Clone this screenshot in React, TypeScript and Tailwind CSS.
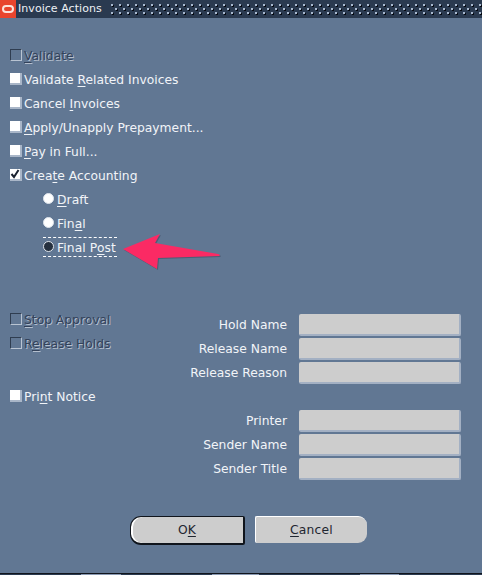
const font = { fontFamily: '"DejaVu Sans", sans-serif' };

function Mn({ t, u }: { t: string; u: number }) {
  return (
    <>
      {t.slice(0, u)}
      <span className="underline underline-offset-2">{t[u]}</span>
      {t.slice(u + 1)}
    </>
  );
}

function Check({ label, u, disabled, checked }: { label: string; u: number; disabled?: boolean; checked?: boolean }) {
  return (
    <div className="flex h-6 items-center">
      {disabled ? (
        <div className="mr-[2px] mb-[2px] h-[12px] w-[12px] border border-[#2f3d50] border-r-[#b9c4d2] border-b-[#b9c4d2]" />
      ) : (
        <div className="relative mr-[2px] mb-[2px] flex h-[12px] w-[12px] items-center justify-center border-r-2 border-b-2 border-[#a9b6c8] bg-white">
          {checked && (
            <svg viewBox="0 0 10 10" className="h-[10px] w-[10px]">
              <path d="M1.5 5 L4 8 L8.5 1" fill="none" stroke="#1a2230" strokeWidth="2" />
            </svg>
          )}
        </div>
      )}
      <span className={disabled ? "text-[#33425a] [text-shadow:1px_1px_0_#b4bfce]" : "text-[#f1f4f8]"}>
        <Mn t={label} u={u} />
      </span>
    </div>
  );
}

function Radio({ label, u, selected }: { label: string; u: number; selected?: boolean }) {
  return (
    <div className="flex h-6 items-center">
      <div
        className={
          "mb-[2px] flex h-5 w-[74px] items-center whitespace-nowrap " +
          (selected ? "border-y border-dashed border-white" : "")
        }
      >
        <div
          className={
            "mr-[3px] mb-[2px] h-[11px] w-[11px] rounded-full border border-[#dfe5ec] " +
            (selected ? "bg-[#25303f]" : "bg-white")
          }
        />
        <span className="mt-[2px] tracking-[0.1px] text-[#f1f4f8]">
          <Mn t={label} u={u} />
        </span>
      </div>
    </div>
  );
}

function Field({ label }: { label: string }) {
  return (
    <div className="flex h-6 items-center justify-end">
      <span className="mr-[12px] text-[#f1f4f8]">{label}</span>
      <div className="h-[22px] w-[162px] rounded-[2px] border-r-2 border-b-2 border-[#a3b0c3] bg-[#cdcdcd]" />
    </div>
  );
}

export default function App() {
  return (
    <div
      style={font}
      className="relative flex h-[575px] w-[482px] flex-col overflow-hidden bg-[#617793] text-[12.3px]"
    >
      <div className="flex h-[18px] items-center bg-[#2a3a50]">
        <div className="flex h-[18px] w-4 items-center justify-center bg-[#e8452e]">
          <div className="h-[8px] w-[12px] rounded-full border-2 border-[#fbe3dc]" />
        </div>
        <span className="ml-[2px] text-[11px] tracking-[0.05px] text-[#eef1f5]">Invoice Actions</span>
        <svg className="ml-[9px] h-[18px] flex-1" aria-hidden="true">
          <defs>
            <pattern id="grip" width="8" height="8" patternUnits="userSpaceOnUse" y="3">
              <rect x="0" y="1" width="2" height="2" fill="#a9b9cf" />
              <rect x="2" y="2" width="1" height="2" fill="#060a12" />
              <rect x="1" y="3" width="2" height="1" fill="#060a12" />
              <rect x="4" y="5" width="2" height="2" fill="#a9b9cf" />
              <rect x="6" y="6" width="1" height="2" fill="#060a12" />
              <rect x="5" y="7" width="2" height="1" fill="#060a12" />
            </pattern>
          </defs>
          <rect x="0" y="3" width="100%" height="13" fill="url(#grip)" />
        </svg>
      </div>

      <div className="mt-[26px] flex flex-col pl-[10px]">
        <Check label="Validate" u={0} disabled />
        <Check label="Validate Related Invoices" u={9} />
        <Check label="Cancel Invoices" u={7} />
        <Check label="Apply/Unapply Prepayment..." u={0} />
        <Check label="Pay in Full..." u={0} />
        <Check label="Create Accounting" u={4} checked />
        <div className="flex flex-col pl-[33px]">
          <Radio label="Draft" u={0} />
          <Radio label="Final" u={3} />
          <Radio label="Final Post" u={7} selected />
        </div>
      </div>

      <div className="mt-[48px] flex pl-[10px] pr-[21px]">
        <div className="flex flex-col">
          <Check label="Stop Approval" u={0} disabled />
          <Check label="Release Holds" u={1} disabled />
        </div>
        <div className="flex flex-1 flex-col pt-[5px]">
          <Field label="Hold Name" />
          <Field label="Release Name" />
          <Field label="Release Reason" />
        </div>
      </div>

      <div className="flex pl-[10px] pr-[21px]">
        <div className="flex flex-col">
          <Check label="Print Notice" u={3} />
        </div>
        <div className="flex flex-1 flex-col pt-[24px]">
          <Field label="Printer" />
          <Field label="Sender Name" />
          <Field label="Sender Title" />
        </div>
      </div>

      <div className="mt-[35px] flex pl-[130px] text-[#1f2630]">
        <div className="flex h-[29px] w-[115px] items-center justify-center rounded-l-[11px] rounded-r-[2px] border border-r-2 border-b-2 border-[#10151c] bg-[#cdcdcd] shadow-[inset_2px_0_0_#ffffff]">
          <Mn t="OK" u={1} />
        </div>
        <div className="ml-[10px] flex h-[27px] w-[112px] items-center justify-center rounded-l-[2px] rounded-r-[9px] border-t border-l border-white bg-[#cdcdcd] tracking-[0.2px]">
          <Mn t="Cancel" u={0} />
        </div>
      </div>

      <div className="absolute bottom-0 left-0 flex h-[2px] w-full border-t border-[#10151c] bg-[#2a3a50]">
        <div className="ml-[81px] w-[40px] bg-[#8a9ab3]" />
        <div className="ml-[91px] w-[47px] bg-[#8a9ab3]" />
        <div className="ml-[101px] w-[39px] bg-[#8a9ab3]" />
      </div>

      <svg className="absolute left-[122px] top-[230px] h-[42px] w-[102px]" viewBox="0 0 102 42" aria-hidden="true">
        <path
          d="M1 19 L38 4 L33 13 L96 24 Q99 25 97 26 L36 28 L35 39 Z"
          fill="#3f4d63"
          opacity="0.6"
          transform="translate(1 1)"
        />
        <path d="M1 19 L38 4 L33 13 L96 24 Q99 25 97 26 L36 28 L35 39 Z" fill="#fb2a64" />
      </svg>
    </div>
  );
}
